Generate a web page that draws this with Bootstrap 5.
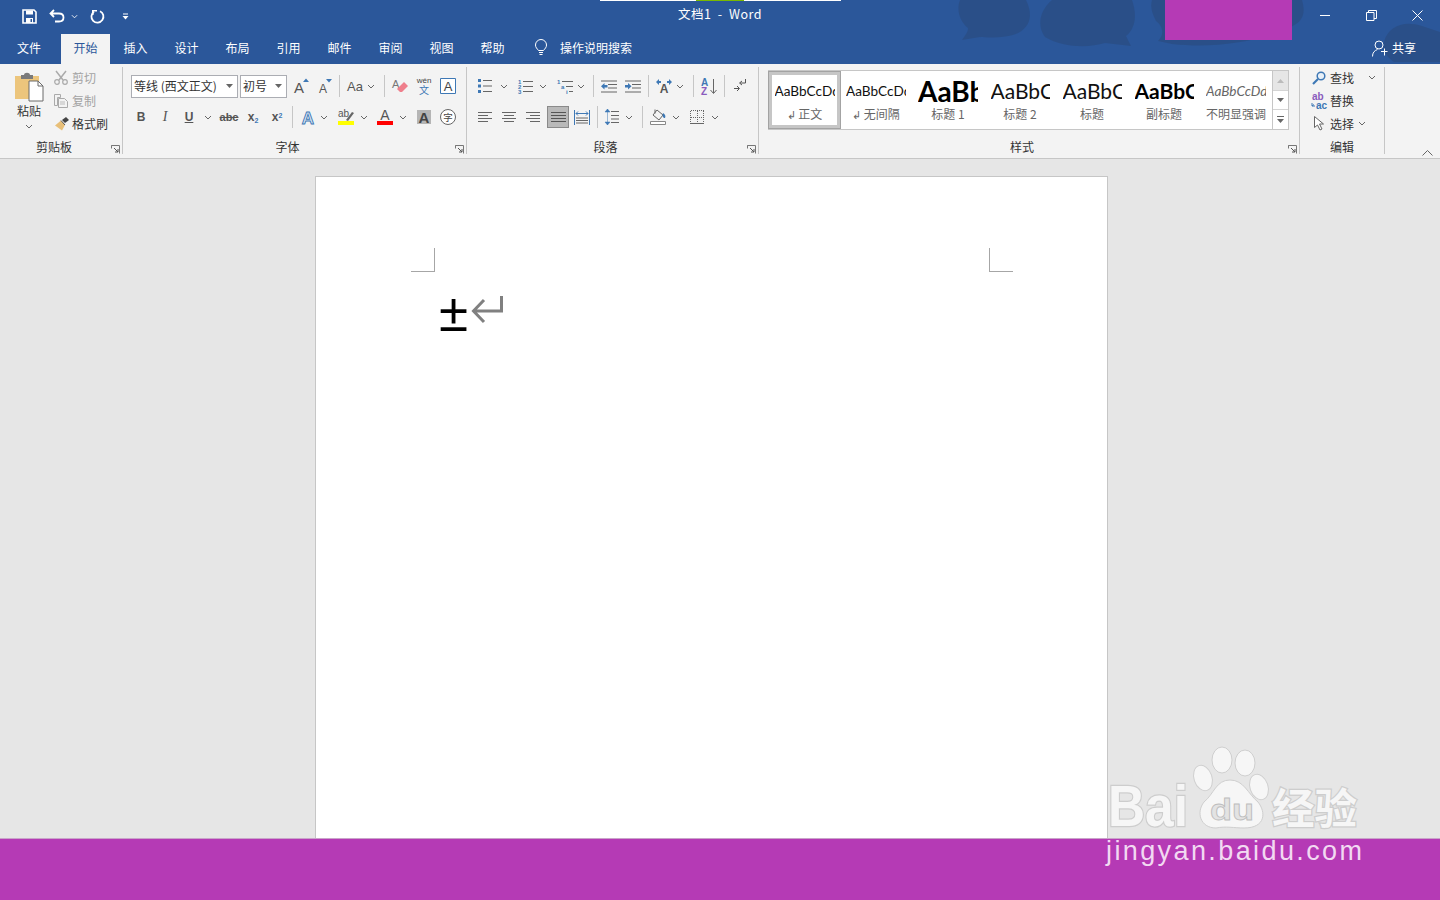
<!DOCTYPE html>
<html lang="zh-CN">
<head>
<meta charset="utf-8">
<title>文档1 - Word</title>
<link href="https://cdn.jsdelivr.net/npm/bootstrap@5.3.0/dist/css/bootstrap.min.css" rel="stylesheet">
<style>
html,body{height:900px;overflow:hidden}
body{font-family:"Noto Sans CJK SC","Liberation Sans",sans-serif;font-size:12px;color:#444;background:#e6e6e6}
svg{overflow:visible}
.app-shell{height:900px;position:relative}
.title-zone{background:#2b579a;height:64px;position:relative;color:#fff;flex:none}
.cloud-art{position:absolute;left:0;top:0;width:1440px;height:64px;overflow:hidden}
.purple-patch{position:absolute;left:1165px;top:0;width:127px;height:40px;background:#b53ab5}
.load-line{position:absolute;left:600px;top:0;width:241px;height:1px;background:#fff}
.load-line i{position:absolute;left:96px;top:0;width:48px;height:1px;background:#7ab800}
.title-row{height:34px;position:relative;display:grid;grid-template-columns:1fr auto 1fr}
.qat{padding-left:17px;height:32px}
.qat-btn{width:24px;height:32px}
.qat-gap{width:4px}.qat-caret{width:11px;height:32px}.qat-gap2{width:5px}
.doc-title{font-size:12.5px;line-height:28px;letter-spacing:.45px}
.win-btn{width:46px;height:30px}
.tab-row{height:30px;position:relative}
.tab-item{width:51px;height:30px;line-height:27px;text-align:center;color:#fff;font-size:12px;padding:0}
.tab-file{width:58px}.tab-active{width:49px;margin-left:3px;background:#f3f3f3;color:#2b579a}
.tab-help{margin-right:16px}
.tab-hint{font-size:12px;line-height:27px;margin-left:12px;color:#fff}
.hint-zone{height:27px}
.share-zone{position:absolute;right:24px;top:1px;height:26px;font-size:12px;color:#fff}
.ribbon{height:95px;background:#f3f3f3;border-bottom:1px solid #c6c6c6;padding-top:3px;flex:none;position:relative}
.rgroup{height:87px;border-right:1px solid #c6c6c6;flex:none;display:flex;flex-direction:column}
.rg-clip{width:123px}.rg-font{width:344px;padding-left:6px}.rg-para{width:292px;padding-left:6px}
.rg-style{width:541px;padding-left:9px}.rg-edit{width:85px}
.rg-font .rfoot,.rg-para .rfoot{margin-left:-6px}
.rg-style .rfoot{margin-left:-9px}
.rcontent{height:71px;flex:none}
.rfoot{height:16px;display:flex;color:#333}
.rfoot b{flex:1;text-align:center;font-weight:400;font-size:12px;line-height:18px}
.launch{width:14px;height:16px;display:flex;align-items:center;justify-content:center;padding-top:6px}
.tool-row{height:24px;display:flex;align-items:center}
.tool-row1{margin-top:7px;margin-bottom:7px}
.tl{height:24px;display:flex;align-items:center;justify-content:center;flex:none}
.tw8{width:8px}.tw10{width:10px}.tw12{width:12px}.tw14{width:14px}.tw22{width:22px}.tw24{width:24px}
.sp1{width:1px;flex:none}.sp2{width:2px;flex:none}.sp3{width:3px;flex:none}.sp4{width:4px;flex:none}.sp6{width:6px;flex:none}.sp8{width:8px;flex:none}.sp9{width:9px;flex:none}
.vsep{width:1px;height:22px;background:#c6c6c6;flex:none}
.just-on{height:22px;background:#b9b9b9;border:1px solid #8a8a8a}
.drop-box{height:23px;background:#fff;border:1px solid #abadb3;flex:none;font-size:12px;color:#333;line-height:20px;padding-left:2px;display:flex;justify-content:space-between;align-items:center;padding-right:4px}
.drop-font{width:107px}.drop-size{width:47px;margin-left:2px}
.glyph{font-family:"Liberation Sans",sans-serif;color:#555;line-height:1}
.g-b{font-weight:700;font-size:12px}.g-i{font-style:italic;font-family:"Liberation Serif",serif;font-size:14px}
.g-u{font-weight:700;font-size:12px;text-decoration:underline}
.g-abc{font-size:11px;text-decoration:line-through;font-weight:700}
.g-x{font-weight:700;font-size:12px}.g-x sub,.g-x sup{color:#3e78b5;font-size:7px;font-weight:700}
.g-aa{font-size:13px}
.clip-left{width:44px;margin-left:7px;flex:none;display:flex;flex-direction:column;align-items:center;padding-top:5px;color:#333}
.clip-left span{line-height:18px}
.clip-rows{flex:none;margin-top:-1px}
.mini-row{height:23px;display:flex;align-items:center;flex:none}
.mini-ic{width:20px;display:flex;justify-content:center;margin-right:1px}
.txt-off{color:#a3a3a3}.txt-on{color:#333}
.gallery{width:521px;height:60px;margin-top:3px;background:#fff;border:1px solid #c6c6c6}
.sty-cell{width:72px;flex:none;padding-top:6px;display:flex;flex-direction:column;align-items:center;height:58px;font-family:Lato,"Noto Sans CJK SC",sans-serif}
.sty-on{border:1px solid #a3a3a3;box-shadow:inset 0 0 0 3px #c6c6c6;margin-left:-1px;margin-right:-1px;width:73px;padding-top:5px}
.sty-prev{width:60px;height:28px;line-height:28px;white-space:nowrap;overflow:hidden;color:#111;font-size:13.6px;text-align:left;flex:none}
.sty-h1{font-size:28px;font-weight:700;color:#000;text-align:left}
.sty-h2{font-size:21px;text-align:left;width:59px}
.sty-sub{font-size:21px;font-weight:700;text-align:left;width:59px;color:#000}
.sty-em{font-size:13.6px;font-style:italic;color:#666}
.sty-name{line-height:18px;color:#666;font-size:12px;font-family:"Noto Sans CJK SC",sans-serif;white-space:nowrap}
.sty-scroll{width:16px;flex:none;margin-left:auto;border-left:1px solid #c6c6c6}
.scr-btn{height:19px;display:flex;align-items:center;justify-content:center;border-bottom:1px solid #d4d4d4}
.scr-top{background:#e6e6e6;height:20px}
.scr-last{border-bottom:0}
.chev-up{position:absolute;right:7px;bottom:2px;line-height:0}
.edit-rows{padding-left:7px}
.edit-rows .mini-row:first-child{margin-top:-1px}
.edit-ic{width:24px;display:flex;justify-content:center;margin-right:-1px}
.edit-text{color:#333}
.doc-area{flex:1;min-height:0;background:#e6e6e6;padding-top:17px;padding-left:315px;overflow:hidden}
.page-sheet{width:793px;height:700px;background:#fff;border:1px solid #c6c6c6;padding:71px 94px 0 95px}
.crop-l{width:24px;height:24px;border-right:1px solid #a6a6a6;border-bottom:1px solid #a6a6a6}
.crop-r{width:24px;height:24px;border-left:1px solid #a6a6a6;border-bottom:1px solid #a6a6a6}
.doc-line{padding-left:28px;margin-top:12px;height:50px;align-items:flex-start}
.doc-char{font-family:"Liberation Sans",sans-serif;font-size:53px;line-height:56px;color:#000;margin-top:1px;width:32px;flex:none}
.doc-mark{margin-top:11px}
.foot-bar{height:62px;background:#b53ab5;flex:none;border-top:1px solid #c9a5c9}
.paw-mark{position:absolute;left:1100px;top:740px;width:270px;height:135px}
.wm-stroke{paint-order:stroke;stroke:#cdcdcd;stroke-width:2.5px;fill:#f6f6f6}
</style>
</head>
<body>
<svg width="0" height="0" class="d-none" aria-hidden="true">
<defs>
<symbol id="cv" viewBox="0 0 8 5"><path d="M1 1l3 3 3-3" fill="none" stroke="#666" stroke-width="1"/></symbol>
<symbol id="cvw" viewBox="0 0 8 5"><path d="M1 1l3 3 3-3" fill="none" stroke="#fff" stroke-width="1"/></symbol>
<symbol id="launch" viewBox="0 0 9 9"><path d="M.5.5h8v8M.5.5v3M.5.5h3" fill="none" stroke="#777"/><path d="M3 3l4 4M7 4v3H4" fill="none" stroke="#555"/></symbol>
</defs>
</svg>
<div class="app-shell d-flex flex-column">

<header class="title-zone">
<svg class="cloud-art" viewBox="0 0 1440 64" aria-hidden="true">
<path fill="#2a4f87" d="M960 0h66c6 12 6 24-6 32-10 6-30 6-40 5l-18 3c4-6 6-8 6-12-8-6-12-18-8-28zM1052 0h80c5 14 4 28-6 36l5 10-26-3c-16 5-42 5-60-6-8-10-6-26 7-37zM1152 0h150c4 14 2 24-20 30-30 14-74 18-110 14l-14-3c6-6 6-14-2-20-4-8-6-14-4-21zM1384 42c4-16 20-22 38-16l18 6v30h-46c-8-6-12-12-10-20z" opacity=".95"/>
</svg>
<div class="purple-patch"></div>
<div class="load-line"><i></i></div>
<div class="title-row">
<div class="qat d-flex align-items-center">
<div class="qat-btn d-flex align-items-center justify-content-center"><svg width="15" height="15" viewBox="0 0 15 15"><path d="M1 1h11l2 2v11H1z" fill="none" stroke="#fff" stroke-width="1.6"/><path d="M4 1.500h7v4H4zM4 9h7v5H4z" fill="#fff"/><path d="M8.500 10h1.500v3H8.500z" fill="#2b579a"/></svg></div>
<div class="qat-gap"></div>
<div class="qat-btn d-flex align-items-center justify-content-center"><svg width="16" height="15" viewBox="0 0 16 15"><path d="M5 1L1.500 4.500 5 8M2 4.500h8c6 0 6 8 0 8H6" fill="none" stroke="#fff" stroke-width="1.800"/></svg></div>
<div class="qat-caret d-flex align-items-center justify-content-center"><svg width="7" height="5"><use href="#cvw"/></svg></div>
<div class="qat-gap2"></div>
<div class="qat-btn d-flex align-items-center justify-content-center"><svg width="15" height="15" viewBox="0 0 15 15"><path d="M10 2.200A6 6 0 1 1 4 2.700" fill="none" stroke="#fff" stroke-width="1.800"/><path d="M2 1h5v1.600H3.600V6H2z" fill="#fff"/></svg></div>
<div class="qat-gap"></div>
<div class="qat-btn d-flex align-items-center justify-content-center"><svg width="7" height="7" viewBox="0 0 7 7"><path d="M1 1h5" stroke="#fff"/><path d="M.5 3h6L3.500 6.500z" fill="#fff"/></svg></div>
</div>
<div class="doc-title">文档1&nbsp; -&nbsp; Word</div>
<div class="d-flex justify-content-end">
<div class="win-btn d-flex align-items-center justify-content-center"><svg width="11" height="11"><path d="M0 5.500h10" stroke="#fff"/></svg></div>
<div class="win-btn d-flex align-items-center justify-content-center"><svg width="11" height="11"><path d="M.5 2.500h7.500v8H.5zM2.500 2.500V.5h8v8H8" fill="none" stroke="#fff"/></svg></div>
<div class="win-btn d-flex align-items-center justify-content-center"><svg width="11" height="11"><path d="M.5.5l10 10M10.500.5l-10 10" stroke="#fff"/></svg></div>
</div>
</div>
<nav class="tab-row d-flex align-items-start">
<div class="tab-item tab-file">文件</div>
<div class="tab-item tab-active">开始</div>
<div class="tab-item">插入</div>
<div class="tab-item">设计</div>
<div class="tab-item">布局</div>
<div class="tab-item">引用</div>
<div class="tab-item">邮件</div>
<div class="tab-item">审阅</div>
<div class="tab-item">视图</div>
<div class="tab-item tab-help">帮助</div>
<div class="d-flex align-items-center hint-zone"><svg width="14" height="17" viewBox="0 0 14 17"><path d="M4.500 11.500C3 9.500 1.500 8.500 1.500 6a5.500 5.500 0 0 1 11 0c0 2.500-1.500 3.500-3 5.500z" fill="none" stroke="#fff"/><path d="M5 13.500h4M5.500 15.500h3" stroke="#fff"/></svg><span class="tab-hint">操作说明搜索</span></div>
<div class="share-zone d-flex align-items-center gap-1"><svg width="16" height="17" viewBox="0 0 16 17"><circle cx="7" cy="5" r="4" fill="none" stroke="#fff"/><path d="M.5 16.500c0-4 2-6 5-7M9 11.500h6.500M12.500 8.500v7" fill="none" stroke="#fff"/></svg><span>共享</span></div>
</nav>
</header>

<section class="ribbon d-flex">
<!-- 剪贴板 -->
<div class="rgroup rg-clip">
<div class="rcontent d-flex">
<div class="clip-left">
<svg width="28" height="30" viewBox="0 0 28 30"><path d="M0 4h24v23H0z" fill="#ecc57c"/><path d="M6 3h3c0-3 6-3 6 0h3v4H6z" fill="#7a7a7a"/><path d="M14 9h9l5 5v15H14z" fill="#fff" stroke="#6a6a6a"/><path d="M23 9v5h5" fill="none" stroke="#6a6a6a"/></svg>
<span>粘贴</span>
<svg width="8" height="5" class="mt-1"><use href="#cv"/></svg>
</div>
<div class="clip-rows">
<div class="mini-row"><div class="mini-ic"><svg width="14" height="15" viewBox="0 0 14 15"><path d="M2 1l7 9M12 1l-7 9" stroke="#aaa" stroke-width="1.500" fill="none"/><circle cx="3" cy="12" r="2.300" fill="none" stroke="#aaa" stroke-width="1.200"/><circle cx="11" cy="12" r="2.300" fill="none" stroke="#aaa" stroke-width="1.200"/></svg></div><span class="txt-off">剪切</span></div>
<div class="mini-row"><div class="mini-ic"><svg width="15" height="14" viewBox="0 0 15 14"><path d="M.5.500h6v3h-3v8h-3zM4.500 4.500h6l3 3v6h-9z" fill="none" stroke="#aaa"/><path d="M6 8h5M6 10h5" stroke="#bbb"/></svg></div><span class="txt-off">复制</span></div>
<div class="mini-row"><div class="mini-ic"><svg width="15" height="14" viewBox="0 0 15 14"><path d="M8 3l4-3 3 3-4 3z" fill="#444"/><path d="M7 3.500L11 8l-3 5.500L1 8.500z" fill="#e8bf78"/><path d="M7 3.500L11 8" stroke="#555"/></svg></div><span class="txt-on">格式刷</span></div>
</div>
</div>
<div class="rfoot"><b>剪贴板</b><span class="launch"><svg width="9" height="9"><use href="#launch"/></svg></span></div>
</div>

<!-- 字体 -->
<div class="rgroup rg-font">
<div class="rcontent">
<div class="tool-row tool-row1">
<span class="sp2"></span>
<div class="drop-box drop-font"><span>等线 (西文正文)</span><svg width="7" height="4"><path d="M0 0h7L3.500 4z" fill="#666"/></svg></div>
<div class="drop-box drop-size"><span>初号</span><svg width="7" height="4"><path d="M0 0h7L3.500 4z" fill="#666"/></svg></div>
<span class="sp2"></span>
<div class="tl tw24"><svg width="18" height="18" viewBox="0 0 18 18"><text x="2" y="16" font-family="Liberation Sans" font-size="15" fill="#555">A</text><path d="M11 5l3-3.500L17 5z" fill="#3e78b5"/></svg></div>
<div class="tl tw24"><svg width="18" height="18" viewBox="0 0 18 18"><text x="3" y="16" font-family="Liberation Sans" font-size="12" fill="#555">A</text><path d="M10 2h6l-3 3.500z" fill="#3e78b5"/></svg></div>
<span class="sp2"></span><div class="vsep"></div><span class="sp3"></span>
<div class="tl tw24"><span class="glyph g-aa">Aa</span></div>
<div class="tl tw8"><svg width="8" height="5"><use href="#cv"/></svg></div>
<span class="sp9"></span><div class="vsep"></div><span class="sp3"></span>
<div class="tl tw24"><svg width="17" height="16" viewBox="0 0 17 16"><text x="0" y="10" font-family="Liberation Sans" font-size="11" fill="#777">A</text><path d="M5 11L12 4l4 4-6 6H8z" fill="#ef7f8c"/></svg></div>
<div class="tl tw24"><svg width="18" height="20" viewBox="0 0 18 20"><text x="9" y="7" text-anchor="middle" font-family="Liberation Sans" font-size="8" fill="#444">wén</text><text x="9" y="18" text-anchor="middle" font-family="Noto Sans CJK SC" font-size="10" fill="#3e78b5">文</text></svg></div>
<div class="tl tw24"><svg width="16" height="16" viewBox="0 0 16 16"><path d="M.5.500h15v15H.5z" fill="#fff" stroke="#3e78b5"/><text x="8" y="13" text-anchor="middle" font-family="Liberation Sans" font-size="13" fill="#444">A</text></svg></div>
</div>
<div class="tool-row">
<div class="tl tw24"><span class="glyph g-b">B</span></div>
<div class="tl tw24"><span class="glyph g-i">I</span></div>
<div class="tl tw24"><span class="glyph g-u">U</span></div>
<div class="tl tw14"><svg width="8" height="5"><use href="#cv"/></svg></div>
<span class="sp2"></span>
<div class="tl tw24"><span class="glyph g-abc">abc</span></div>
<div class="tl tw24"><span class="glyph g-x">x<sub>2</sub></span></div>
<div class="tl tw24"><span class="glyph g-x">x<sup>2</sup></span></div>
<span class="sp3"></span><div class="vsep"></div><span class="sp3"></span>
<div class="tl tw24"><svg width="16" height="16" viewBox="0 0 16 16"><text x="8" y="14.500" text-anchor="middle" font-family="Liberation Sans" font-weight="700" font-size="17" fill="#dce8f5" stroke="#3e78b5" stroke-width=".9">A</text></svg></div>
<div class="tl tw8"><svg width="8" height="5"><use href="#cv"/></svg></div>
<span class="sp6"></span>
<div class="tl tw24"><svg width="16" height="16" viewBox="0 0 16 16"><text x="0" y="8" font-family="Liberation Sans" font-size="10" fill="#555">ab</text><path d="M8 11l6-8 2 1-6 8z" fill="#666"/><path d="M0 12h16v4H0z" fill="#ff0"/></svg></div>
<div class="tl tw12"><svg width="8" height="5"><use href="#cv"/></svg></div>
<span class="sp3"></span>
<div class="tl tw24"><svg width="16" height="16" viewBox="0 0 16 16"><text x="8" y="11" text-anchor="middle" font-family="Liberation Sans" font-size="14" fill="#555">A</text><path d="M0 12h16v4H0z" fill="#f00"/></svg></div>
<div class="tl tw12"><svg width="8" height="5"><use href="#cv"/></svg></div>
<span class="sp3"></span>
<div class="tl tw24"><svg width="14" height="14" viewBox="0 0 14 14"><path d="M0 0h14v14H0z" fill="#b5b5b5"/><text x="7" y="13" text-anchor="middle" font-family="Liberation Sans" font-weight="700" font-size="15" fill="#444">A</text></svg></div>
<div class="tl tw24"><svg width="16" height="16" viewBox="0 0 16 16"><circle cx="8" cy="8" r="7.500" fill="#fff" stroke="#666"/><text x="8" y="11.500" text-anchor="middle" font-family="Noto Sans CJK SC" font-size="9.500" fill="#444">字</text></svg></div>
</div>
</div>
<div class="rfoot"><b>字体</b><span class="launch"><svg width="9" height="9"><use href="#launch"/></svg></span></div>
</div>

<!-- 段落 -->
<div class="rgroup rg-para">
<div class="rcontent">
<div class="tool-row tool-row1">
<div class="tl tw24"><svg width="14" height="14" viewBox="0 0 14 14"><path d="M0 0h3v3H0zM0 5.500h3v3H0zM0 11h3v3H0z" fill="#3e78b5"/><path d="M5 1.500h9M5 7h9M5 12.500h9" stroke="#666" stroke-width="1.200"/></svg></div>
<div class="tl tw14"><svg width="8" height="5"><use href="#cv"/></svg></div>
<span class="sp2"></span>
<div class="tl tw24"><svg width="15" height="15" viewBox="0 0 15 15"><text x="0" y="5" font-family="Liberation Sans" font-size="6" font-weight="700" fill="#3e78b5">1</text><text x="0" y="10" font-family="Liberation Sans" font-size="6" font-weight="700" fill="#3e78b5">2</text><text x="0" y="15" font-family="Liberation Sans" font-size="6" font-weight="700" fill="#3e78b5">3</text><path d="M5 2.500h10M5 7.500h10M5 12.500h10" stroke="#666" stroke-width="1.200"/></svg></div>
<div class="tl tw12"><svg width="8" height="5"><use href="#cv"/></svg></div>
<span class="sp4"></span>
<div class="tl tw24"><svg width="16" height="15" viewBox="0 0 16 15"><text x="0" y="5" font-family="Liberation Sans" font-size="6" font-weight="700" fill="#3e78b5">1</text><text x="4" y="10" font-family="Liberation Sans" font-size="6" font-weight="700" fill="#3e78b5">a</text><text x="9" y="15" font-family="Liberation Sans" font-size="6" font-weight="700" fill="#3e78b5">i</text><path d="M5 2.500h11M9 7.500h7M12 12.500h4" stroke="#666" stroke-width="1.200"/></svg></div>
<div class="tl tw8"><svg width="8" height="5"><use href="#cv"/></svg></div>
<span class="sp8"></span><div class="vsep"></div><span class="sp3"></span>
<div class="tl tw24"><svg width="16" height="13" viewBox="0 0 16 13"><path d="M0 1h16M7 4.500h9M7 8h9M0 12h16" stroke="#666" stroke-width="1.200"/><path d="M0 6.300l3.500-3.300v2h3v2.600h-3v2z" fill="#3e78b5"/></svg></div>
<div class="tl tw24"><svg width="16" height="13" viewBox="0 0 16 13"><path d="M0 1h16M7 4.500h9M7 8h9M0 12h16" stroke="#666" stroke-width="1.200"/><path d="M6.500 6.300L3 3v2H0v2.600h3v2z" fill="#3e78b5"/></svg></div>
<span class="sp3"></span><div class="vsep"></div><span class="sp3"></span>
<div class="tl tw24"><svg width="16" height="14" viewBox="0 0 16 14"><path d="M0 3l3-3v2h2v2H3v2zM16 3l-3-3v2h-2v2h2v2z" fill="#3e78b5"/><text x="8" y="14" text-anchor="middle" font-family="Liberation Sans" font-weight="700" font-size="12" fill="#555">A</text></svg></div>
<div class="tl tw8"><svg width="8" height="5"><use href="#cv"/></svg></div>
<span class="sp9"></span><div class="vsep"></div><span class="sp3"></span>
<div class="tl tw24"><svg width="16" height="17" viewBox="0 0 16 17"><text x="0" y="8" font-family="Liberation Sans" font-weight="700" font-size="10" fill="#3e78b5">A</text><text x="0" y="17" font-family="Liberation Sans" font-weight="700" font-size="10" fill="#8a5bbd">Z</text><path d="M12.500 1v14M9.500 12l3 3.500 3-3.500" fill="none" stroke="#666"/></svg></div>
<span class="sp3"></span><div class="vsep"></div><span class="sp3"></span>
<div class="tl tw24"><svg width="12" height="14" viewBox="0 0 12 14"><path d="M11.500 0v4H6M8 2L5.500 4 8 6" fill="none" stroke="#555"/><path d="M0 9.500h5M3 7l2.500 2.500L3 12" fill="none" stroke="#555"/></svg></div>
</div>
<div class="tool-row">
<div class="tl tw24"><svg width="15" height="11" viewBox="0 0 15 11"><path d="M0 .5h14M0 3.500h10M0 6.500h14M0 9.500h10" stroke="#666"/></svg></div>
<div class="tl tw24"><svg width="15" height="11" viewBox="0 0 15 11"><path d="M0 .5h14M2 3.500h10M0 6.500h14M2 9.500h10" stroke="#666"/></svg></div>
<div class="tl tw24"><svg width="15" height="11" viewBox="0 0 15 11"><path d="M0 .5h14M4 3.500h10M0 6.500h14M4 9.500h10" stroke="#666"/></svg></div>
<span class="sp2"></span>
<div class="tl tw22 just-on"><svg width="15" height="11" viewBox="0 0 15 11"><path d="M0 .5h15M0 3.500h15M0 6.500h15M0 9.500h15" stroke="#555"/></svg></div>
<span class="sp1"></span>
<div class="tl tw24"><svg width="16" height="15" viewBox="0 0 16 15"><path d="M.5 0v15M15.500 0v15" stroke="#3e78b5"/><path d="M2 3.500h12M2 3.500l2-2M2 3.500l2 2M14 3.500l-2-2M14 3.500l-2 2" stroke="#3e78b5" fill="none"/><path d="M2 8h12M2 10.500h12M2 13h12" stroke="#666"/></svg></div>
<span class="sp3"></span><div class="vsep"></div><span class="sp2"></span>
<div class="tl tw24"><svg width="14" height="16" viewBox="0 0 14 16"><path d="M2.500 0v16M0 3l2.500-3L5 3zM0 13l2.500 3L5 13z" fill="#3e78b5" stroke="#3e78b5" stroke-width=".5"/><path d="M6 2.500h8M6 6.500h8M6 10h8M6 13.500h8" stroke="#666"/></svg></div>
<div class="tl tw10"><svg width="8" height="5"><use href="#cv"/></svg></div>
<span class="sp8"></span><div class="vsep"></div><span class="sp3"></span>
<div class="tl tw24"><svg width="16" height="16" viewBox="0 0 16 16"><path d="M7 1l6 5-4 5-6-5zM5 .5v4" fill="none" stroke="#666"/><path d="M13 4c2 1 3 3 2 5-2 0-3-2-2-5z" fill="#3e78b5"/><path d="M.5 12.500h15v3H.5z" fill="#fff" stroke="#888"/></svg></div>
<div class="tl tw12"><svg width="8" height="5"><use href="#cv"/></svg></div>
<span class="sp3"></span>
<div class="tl tw24"><svg width="14" height="14" viewBox="0 0 14 14" shape-rendering="crispEdges"><path d="M.5.500h13M.5.500v13M13.500.500v13M7 .5v13M.5 7h13" fill="none" stroke="#666" stroke-dasharray="1 1"/><path d="M.5 13.500h13" stroke="#666"/></svg></div>
<div class="tl tw12"><svg width="8" height="5"><use href="#cv"/></svg></div>
</div>
</div>
<div class="rfoot"><b>段落</b><span class="launch"><svg width="9" height="9"><use href="#launch"/></svg></span></div>
</div>

<!-- 样式 -->
<div class="rgroup rg-style">
<div class="rcontent">
<div class="gallery d-flex">
<div class="sty-cell sty-on"><div class="sty-prev">AaBbCcDdEe</div><div class="sty-name"><small>↲</small> 正文</div></div>
<div class="sty-cell"><div class="sty-prev">AaBbCcDdEe</div><div class="sty-name"><small>↲</small> 无间隔</div></div>
<div class="sty-cell"><div class="sty-prev sty-h1">AaBbCc</div><div class="sty-name">标题 1</div></div>
<div class="sty-cell"><div class="sty-prev sty-h2">AaBbCc</div><div class="sty-name">标题 2</div></div>
<div class="sty-cell"><div class="sty-prev sty-h2">AaBbCc</div><div class="sty-name">标题</div></div>
<div class="sty-cell"><div class="sty-prev sty-sub">AaBbCc</div><div class="sty-name">副标题</div></div>
<div class="sty-cell"><div class="sty-prev sty-em">AaBbCcDdEe</div><div class="sty-name">不明显强调</div></div>
<div class="sty-scroll">
<div class="scr-btn scr-top"><svg width="7" height="4"><path d="M0 4h7L3.500 0z" fill="#bbb"/></svg></div>
<div class="scr-btn"><svg width="7" height="4"><path d="M0 0h7L3.500 4z" fill="#666"/></svg></div>
<div class="scr-btn scr-last"><svg width="7" height="7" viewBox="0 0 7 7"><path d="M0 .5h7" stroke="#666"/><path d="M0 3h7L3.500 7z" fill="#666"/></svg></div>
</div>
</div>
</div>
<div class="rfoot"><b>样式</b><span class="launch"><svg width="9" height="9"><use href="#launch"/></svg></span></div>
</div>

<!-- 编辑 -->
<div class="rgroup rg-edit">
<div class="rcontent edit-rows">
<div class="mini-row"><div class="edit-ic"><svg width="14" height="14" viewBox="0 0 14 14"><circle cx="9" cy="5" r="3.800" fill="#e8f0f8" stroke="#3e78b5" stroke-width="1.500"/><path d="M6 8l-5 5" stroke="#3e78b5" stroke-width="2.200"/></svg></div><span class="edit-text">查找</span><svg width="8" height="5" class="ms-auto me-2"><use href="#cv"/></svg></div>
<div class="mini-row"><div class="edit-ic"><svg width="17" height="16" viewBox="0 0 17 16"><text x="1" y="7" font-family="Liberation Sans" font-weight="700" font-size="10" fill="#8a5bbd">ab</text><text x="5" y="15.500" font-family="Liberation Sans" font-weight="700" font-size="10" fill="#3e78b5">ac</text><path d="M1 10v3h3M1 13l2-1.500" stroke="#3e78b5" fill="none"/></svg></div><span class="edit-text">替换</span></div>
<div class="mini-row"><div class="edit-ic"><svg width="11" height="15" viewBox="0 0 11 15"><path d="M.5.500v11l3-2.500 2.500 5 2-1-2.500-5h4z" fill="#fff" stroke="#666"/></svg></div><span class="edit-text">选择</span><svg width="8" height="5" class="ms-1"><use href="#cv"/></svg></div>
</div>
<div class="rfoot"><b>编辑</b></div>
</div>
<div class="chev-up"><svg width="11" height="6"><path d="M.5 5.500l5-5 5 5" fill="none" stroke="#666"/></svg></div>
</section>

<main class="doc-area">
<div class="page-sheet">
<div class="d-flex justify-content-between"><div class="crop-l"></div><div class="crop-r"></div></div>
<div class="doc-line d-flex">
<span class="doc-char">±</span>
<svg class="doc-mark" width="32" height="30" viewBox="0 0 32 30"><path d="M30.500 1v15H3M13 5L2.500 16 13 27" fill="none" stroke="#808080" stroke-width="3"/></svg>
</div>
</div>
</main>
<footer class="foot-bar"></footer>

<svg class="paw-mark" viewBox="0 0 270 135">
<text class="wm-stroke" x="8" y="86" font-family="Liberation Sans" font-weight="700" font-size="58" textLength="80" lengthAdjust="spacingAndGlyphs">Bai</text>
<g fill="#f6f6f6" stroke="#cfcfcf" stroke-width="1">
<ellipse cx="122" cy="20" rx="10" ry="13"/>
<ellipse cx="145" cy="23" rx="10" ry="13"/>
<ellipse cx="103" cy="38" rx="9" ry="13" transform="rotate(-18 103 38)"/>
<ellipse cx="159" cy="47" rx="9" ry="13" transform="rotate(-18 159 47)"/>
<path d="M130 40c14 0 18 14 28 22 8 10 8 26-14 26-10 0-18-2-28 0-16 0-20-16-12-26 10-8 12-22 26-22z"/>
</g>
<text x="110" y="80" font-family="Liberation Sans" font-size="30" font-weight="700" fill="#e3e3e3" stroke="#bdbdbd" stroke-width=".8" textLength="44" lengthAdjust="spacingAndGlyphs">du</text>
<text class="wm-stroke" x="172" y="84" font-family="Noto Sans CJK SC" font-weight="700" font-size="42" textLength="85" lengthAdjust="spacingAndGlyphs">经验</text>
<text x="6" y="120" font-family="Liberation Sans" font-size="27" fill="#f2d9f2" textLength="256">jingyan.baidu.com</text>
</svg>
</div>
<script src="https://cdn.jsdelivr.net/npm/bootstrap@5.3.0/dist/js/bootstrap.bundle.min.js"></script>
</body>
</html>
